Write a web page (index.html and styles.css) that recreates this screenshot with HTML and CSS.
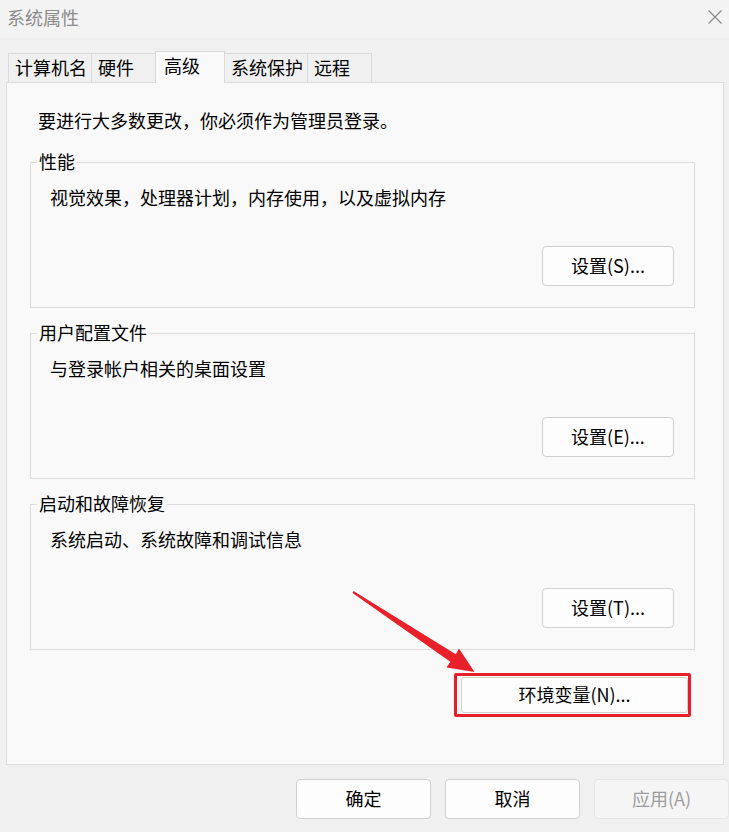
FILE: index.html
```html
<!DOCTYPE html>
<html lang="zh-CN">
<head>
  <meta charset="UTF-8">
  <meta name="viewport" content="width=device-width, initial-scale=1.0">
  <title>系统属性</title>
  <link rel="stylesheet" href="styles.css">
</head>
<body>
  <div class="window">
    <!-- Title bar -->
    <div class="titlebar">
      <span class="title">系统属性</span>
      <svg class="close" width="16" height="16" viewBox="0 0 16 16">
        <path d="M1.5 1.5 L14.5 14.5 M14.5 1.5 L1.5 14.5" stroke="#8a8a8a" stroke-width="1.2" fill="none"/>
      </svg>
    </div>

    <!-- Tabs -->
    <div class="tabs">
      <div class="tab">计算机名</div>
      <div class="tab">硬件</div>
      <div class="tab active">高级</div>
      <div class="tab">系统保护</div>
      <div class="tab">远程</div>
    </div>

    <div class="panel">
      <p class="intro">要进行大多数更改，你必须作为管理员登录。</p>

      <div class="group">
        <div class="group-title">性能</div>
        <p class="group-desc">视觉效果，处理器计划，内存使用，以及虚拟内存</p>
        <div class="group-actions"><button class="btn">设置(S)...</button></div>
      </div>

      <div class="group">
        <div class="group-title">用户配置文件</div>
        <p class="group-desc">与登录帐户相关的桌面设置</p>
        <div class="group-actions"><button class="btn">设置(E)...</button></div>
      </div>

      <div class="group">
        <div class="group-title">启动和故障恢复</div>
        <p class="group-desc">系统启动、系统故障和调试信息</p>
        <div class="group-actions"><button class="btn">设置(T)...</button></div>
      </div>

      <div class="env-row">
        <span class="highlight"><button class="btn env">环境变量(N)...</button></span>
      </div>
    </div>

    <!-- Dialog buttons -->
    <div class="footer">
      <button class="btn dialog">确定</button>
      <button class="btn dialog">取消</button>
      <button class="btn dialog disabled">应用(A)</button>
    </div>

    <!-- Annotation arrow -->
    <svg class="arrow" width="729" height="832" viewBox="0 0 729 832">
      <polygon points="353.5,591 455.8,654.2 459,648.5 474.5,672 446.5,667.5 450.3,661.8 352.5,593" fill="#e8202a"/>
    </svg>
  </div>
</body>
</html>
```

FILE: styles.css
```css
body {
  margin: 0;
  font-family: "Noto Sans CJK SC", "Noto Sans", sans-serif;
  font-size: 18px;
  color: #000;
  background: #f0f0f0;
}
.window {
  position: relative;
  width: 729px;
  height: 832px;
  overflow: hidden;
}
p {
  margin: 0;
}

/* title bar */
.titlebar {
  display: flex;
  align-items: center;
  justify-content: space-between;
  height: 38px;
  padding: 0 6px 4px 7px;
  box-sizing: border-box;
  background: #f3f3f3;
}
.title {
  color: #8b8b8b;
  line-height: 24px;
}

/* tabs */
.tabs {
  display: flex;
  align-items: flex-end;
  height: 29px;
  margin-top: 15px;
  padding-left: 8px;
}
.tab {
  box-sizing: border-box;
  height: 29px;
  min-width: 65px;
  margin-right: -1px;
  padding: 0 4px 0 6px;
  line-height: 27px;
  border: 1px solid #dadada;
  border-bottom: none;
  background: #f0f0f0;
}
.tab.active {
  position: relative;
  z-index: 1;
  height: 32px;
  min-width: 70px;
  margin-bottom: -1px;
  padding-left: 8px;
  line-height: 26px;
  background: #f9f9f9;
}

/* main panel */
.panel {
  box-sizing: border-box;
  height: 683px;
  margin-left: 6px;
  width: 718px;
  padding: 25px 28px 0 23px;
  border: 1px solid #dcdcdc;
  background: #f9f9f9;
}
.intro {
  margin-left: 8px;
  line-height: 24px;
}
.group {
  margin-top: 30px;
  padding: 0 20px 21px 19px;
  border: 1px solid #dcdcdc;
}
.group + .group {
  margin-top: 25px;
}
.group-title {
  width: fit-content;
  margin: -14px 0 0 -13px;
  padding: 0 2px;
  line-height: 24px;
  background: #f9f9f9;
}
.group-desc {
  margin-top: 12px;
  line-height: 24px;
}
.group-actions {
  display: flex;
  justify-content: flex-end;
  margin-top: 37px;
}

/* buttons */
.btn {
  box-sizing: border-box;
  width: 132px;
  height: 40px;
  font-family: inherit;
  font-size: 18px;
  color: #000;
  background: #fdfdfd;
  border: 1px solid #d0d0d0;
  border-radius: 4px;
  padding: 0 0 2px;
}
.env-row {
  display: flex;
  justify-content: flex-end;
  margin: 23px 4px 0 0;
}
.highlight {
  display: inline-flex;
  padding: 1px 0 1px 4px;
  border: 3px solid #e8202a;
  border-radius: 2px;
}
.btn.env {
  width: 227px;
  height: 36px;
  border-radius: 3px;
}
.footer {
  display: flex;
  justify-content: flex-end;
  gap: 14px;
  margin-top: 14px;
}
.btn.dialog {
  width: 135px;
  height: 40px;
}
.btn.disabled {
  color: #9d9d9d;
  background: #f5f5f5;
  border-color: #e6e6e6;
}

/* annotation overlay */
.arrow {
  position: absolute;
  left: 0;
  top: 0;
  pointer-events: none;
}
```
